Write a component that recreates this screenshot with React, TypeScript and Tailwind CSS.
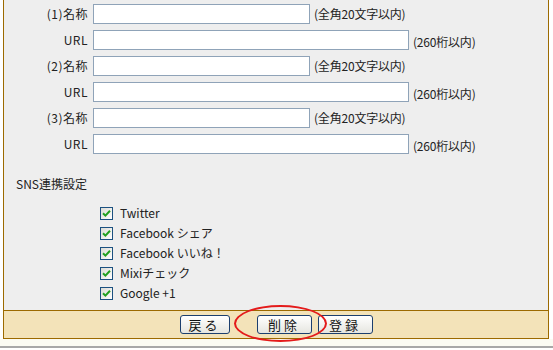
import React from 'react';

const font = { fontFamily: '"Noto Sans CJK JP", "Noto Sans", sans-serif' };

const LinkRow: React.FC<{ no: string }> = ({ no }) => (
  <>
    <div className="flex items-center h-[20px] mb-[6px]">
      <span className="w-[85px] pr-[1px] text-right tracking-[0.5px]">({no})名称</span>
      <input className="ml-[4px] w-[217px] h-[20px] bg-white border border-[#8fa3b8] outline-none" />
      <span className="ml-[4px] tracking-[-0.2px]">(全角20文字以内)</span>
    </div>
    <div className="flex items-center h-[20px] mb-[6px]">
      <span className="w-[85px] pr-[1px] text-right tracking-[0.5px]">URL</span>
      <input className="ml-[4px] w-[316px] h-[20px] bg-white border border-[#8fa3b8] outline-none" />
      <span className="ml-[4px] mt-[4px] tracking-[-0.2px]">(260桁以内)</span>
    </div>
  </>
);

const Check: React.FC<{ label: string }> = ({ label }) => (
  <div className="flex items-center h-[20px]">
    <span className="w-[13px] h-[13px] border border-[#1c5180] bg-gradient-to-br from-[#dcdcd6] to-white flex items-center justify-center">
      <svg width="9" height="9" viewBox="0 0 9 9">
        <path d="M1 4.2 L3.4 6.6 L8 1.8" stroke="#21a121" strokeWidth="2" fill="none" />
      </svg>
    </span>
    <span className="ml-[7px]">{label}</span>
  </div>
);

const Btn: React.FC<{ label: string; w: string; cls?: string }> = ({ label, w, cls }) => (
  <button
    className={`${w} ${cls ?? ''} h-[19px] rounded-[3px] border border-[#1c3f6e] bg-gradient-to-b from-white to-[#e6e6e0] text-[13px] leading-none tracking-[3px] text-[#111]`}
  >
    {label}
  </button>
);

export default function App() {
  return (
    <div className="relative w-[553px] h-[350px] bg-white text-[12px] text-[#222]" style={font}>
      <div className="ml-[3px] w-[546px] border-x border-[#9c6a00]">
        <div className="h-[310px] bg-[#eeeeee] pt-[4px]">
          <LinkRow no="1" />
          <LinkRow no="2" />
          <LinkRow no="3" />
          <div className="mt-[21px] ml-[12px]">SNS連携設定</div>
          <div className="ml-[96px] mt-[10px]">
            <Check label="Twitter" />
            <Check label="Facebook シェア" />
            <Check label="Facebook いいね！" />
            <Check label="Mixiチェック" />
            <Check label="Google +1" />
          </div>
        </div>
        <div className="h-[29px] bg-[#f3e3b9] border-y border-[#9c6a00] flex items-center justify-center">
          <Btn label="戻る" w="w-[50px]" />
          <Btn label="削除" w="w-[55px]" cls="ml-[27px]" />
          <Btn label="登録" w="w-[55px]" cls="ml-[6px]" />
        </div>
      </div>
      <div className="h-[7px] bg-[#fbfbf3]" />
      <div className="h-[2px] bg-[#a8a8a8]" />
      <div className="absolute left-[234px] top-[305px] w-[93px] h-[37px] rounded-[50%] border-2 border-[#e41b1b]" />
    </div>
  );
}
